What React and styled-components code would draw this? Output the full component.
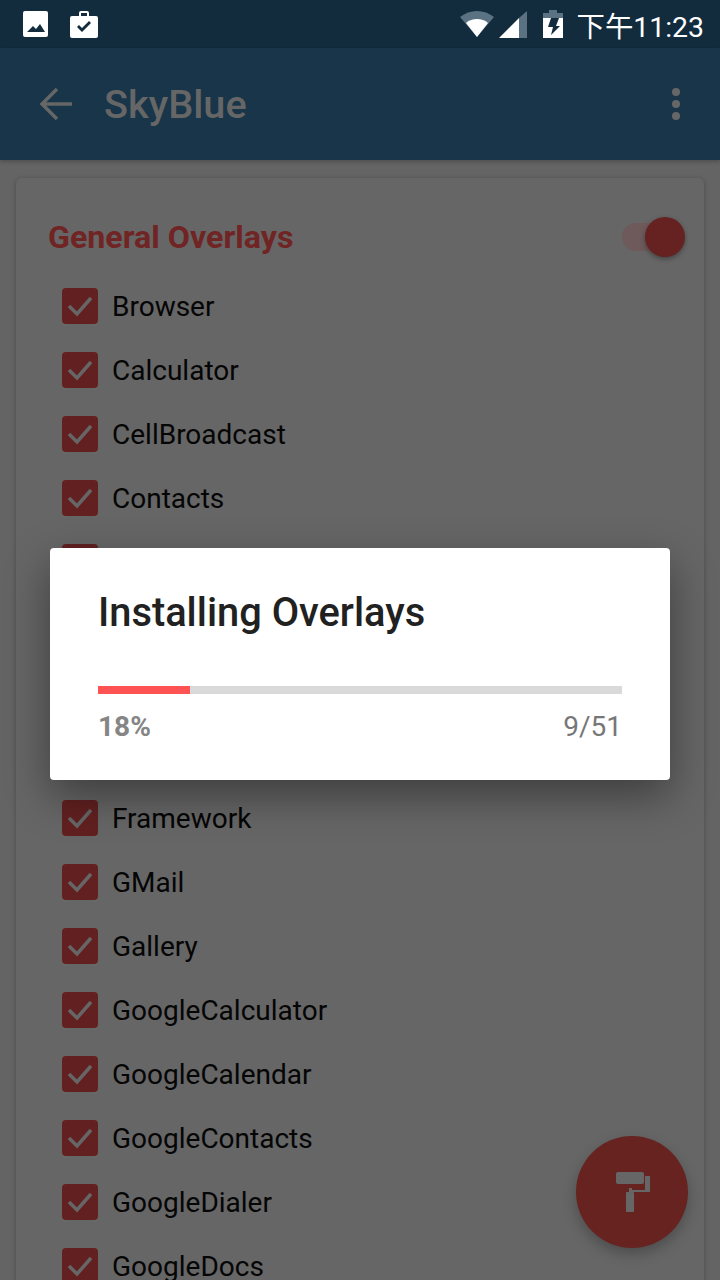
import React from 'react'
import styled, { createGlobalStyle } from 'styled-components'

// the rows behind the dialog can't be read in the picture, so they stay without a label
const items = ['Browser', 'Calculator', 'CellBroadcast', 'Contacts', '', '', '', '', 'Framework', 'GMail', 'Gallery', 'GoogleCalculator', 'GoogleCalendar', 'GoogleContacts', 'GoogleDialer', 'GoogleDocs']

const App = () => {
  return (
    <Screen>
      <GlobalStyle />
      <StatusBar>
        <StatusLeft>
          <svg width="25" height="26" viewBox="0 0 25 26">
            <path fill="#fff" fillRule="evenodd" d="M2 0h21a2 2 0 0 1 2 2v22a2 2 0 0 1-2 2H2a2 2 0 0 1-2-2V2a2 2 0 0 1 2-2zM4 21h18l-5-8-4 5-3-3z" />
          </svg>
          <svg width="28" height="27" viewBox="0 0 28 27">
            <path fill="#fff" fillRule="evenodd" d="M9 5V2a2 2 0 0 1 2-2h6a2 2 0 0 1 2 2v3h7a2 2 0 0 1 2 2v18a2 2 0 0 1-2 2H2a2 2 0 0 1-2-2V7a2 2 0 0 1 2-2zM11 2v3h6V2zM7 16l2-2 3 3 7-7 2 2-9 9z" />
          </svg>
        </StatusLeft>
        <StatusRight>
          <svg width="34" height="26" viewBox="0 0 34 26">
            <path fill="#5b7283" d="M17 26 0 6C5 2 11 0 17 0s12 2 17 6z" />
            <path fill="#fff" d="M17 26 6 12c3-3 7-4 11-4s8 1 11 4z" />
          </svg>
          <SignalIcon width="28" height="27" viewBox="0 0 28 27">
            <path fill="#5b7283" d="M28 0v27H20V7z" />
            <path fill="#fff" d="M20 7v20H0z" />
          </SignalIcon>
          <BatteryIcon width="20" height="28" viewBox="0 0 20 28">
            <path fill="#5b7283" d="M6 0h8v3h6v5H0V3h6z" />
            <path fill="#fff" d="M0 8h20v20H0z" />
            <path fill="#122b3d" d="M8 8h8l-3 8h4L8 25l2-8H5z" />
          </BatteryIcon>
          <Clock>下午11:23</Clock>
        </StatusRight>
      </StatusBar>

      <Toolbar>
        <svg width="34" height="34" viewBox="0 0 34 34">
          <path fill="none" stroke="#666" strokeWidth="3.5" d="M33 17H4M18 2 3 17l15 15" />
        </svg>
        <Title>SkyBlue</Title>
        <Dots>
          <i /><i /><i />
        </Dots>
      </Toolbar>

      <Body>
        <Card>
          <CardHeader>
            <CardTitle>General Overlays</CardTitle>
            <Switch><Knob /></Switch>
          </CardHeader>
          {items.map((name, i) => (
            <Row key={i}>
              <Check>
                <svg width="28" height="24" viewBox="0 0 28 24">
                  <path fill="none" stroke="#666" strokeWidth="3.5" d="M3 12l8 8L25 4" />
                </svg>
              </Check>
              <Label>{name}</Label>
            </Row>
          ))}
        </Card>
      </Body>

      <Fab>
        <FabIcon width="34" height="40" viewBox="0 0 34 40">
          <path fill="#666" d="M2 0h24a2 2 0 0 1 2 2v8a2 2 0 0 1-2 2H2a2 2 0 0 1-2-2V2a2 2 0 0 1 2-2zM29 4h5v16H16v-2h13zM11 20h6a1 1 0 0 1 1 1v18a1 1 0 0 1-1 1h-6a1 1 0 0 1-1-1V21a1 1 0 0 1 1-1zM13 16h3v4h-3z" />
        </FabIcon>
      </Fab>

      <Dialog>
        <DialogTitle>Installing Overlays</DialogTitle>
        <Track>
          <Fill style={{ width: `${(9 / 51) * 100}%` }} />
        </Track>
        <Meta>
          <Percent>18%</Percent>
          <Count>9/51</Count>
        </Meta>
      </Dialog>
    </Screen>
  )
}

const GlobalStyle = createGlobalStyle`
  html, body {
    margin: 0;
    padding: 0;
    background: #646464;
  }
  * {
    box-sizing: border-box;
  }
`

const Screen = styled.div`
  position: relative;
  width: 720px;
  height: 1280px;
  overflow: hidden;
  display: flex;
  flex-direction: column;
  font-family: Roboto, "Noto Sans", sans-serif;
  background: #646464;
`

const StatusBar = styled.div`
  height: 48px;
  flex-shrink: 0;
  background: #122b3d;
  display: flex;
  justify-content: space-between;
  align-items: center;
  padding: 0 16px 0 23px;
`

const StatusLeft = styled.div`
  display: flex;
  align-items: center;
  gap: 22px;
`

const StatusRight = styled.div`
  display: flex;
  align-items: center;
`

const SignalIcon = styled.svg`
  margin-left: 5px;
`

const BatteryIcon = styled.svg`
  margin-left: 16px;
`

const Clock = styled.span`
  margin-left: 14px;
  color: #fff;
  font-size: 28.4px;
  font-family: Roboto, "Noto Sans CJK TC", sans-serif;
`

const Toolbar = styled.div`
  height: 112px;
  flex-shrink: 0;
  background: #183549;
  display: flex;
  align-items: center;
  padding: 0 38px 0 39px;
  box-shadow: 0 2px 4px rgba(0, 0, 0, 0.2);
  position: relative;
`

const Title = styled.h1`
  margin: 0 0 0 31px;
  font-size: 39.7px;
  font-weight: 500;
  color: #666;
  flex: 1;
`

const Dots = styled.div`
  display: flex;
  flex-direction: column;
  gap: 4px;
  margin-right: 2px;
  i {
    width: 8px;
    height: 8px;
    border-radius: 50%;
    background: #666;
  }
`

const Body = styled.div`
  flex: 1;
  padding: 18px 16px 0;
  overflow: hidden;
`

const Card = styled.div`
  background: #666;
  border-radius: 6px;
  padding: 32px 26px 0 32px;
  box-shadow: 0 1px 5px rgba(0, 0, 0, 0.25);
`

const CardHeader = styled.div`
  display: flex;
  justify-content: space-between;
  align-items: center;
  height: 54px;
  margin-bottom: 10px;
`

const CardTitle = styled.h2`
  margin: 0;
  font-size: 32.2px;
  font-weight: 700;
  color: #702424;
`

const Switch = styled.div`
  position: relative;
  width: 56px;
  height: 28px;
  border-radius: 14px;
  background: #6e5a5a;
`

const Knob = styled.div`
  position: absolute;
  right: -7px;
  top: -6px;
  width: 40px;
  height: 40px;
  border-radius: 50%;
  background: #662121;
  box-shadow: 0 2px 5px rgba(0, 0, 0, 0.35);
`

const Row = styled.div`
  display: flex;
  align-items: center;
  height: 64px;
  padding-left: 14px;
`

const Check = styled.div`
  width: 36px;
  height: 36px;
  border-radius: 4px;
  background: #622020;
  display: flex;
  align-items: center;
  justify-content: center;
`

const Label = styled.span`
  margin-left: 14px;
  font-size: 28px;
  color: #050505;
`

const Fab = styled.div`
  position: absolute;
  left: 576px;
  top: 1136px;
  width: 112px;
  height: 112px;
  border-radius: 50%;
  background: #662320;
  display: flex;
  align-items: center;
  justify-content: center;
  box-shadow: 0 6px 14px rgba(0, 0, 0, 0.25);
`

const FabIcon = styled.svg`
  margin-right: -1px;
`

const Dialog = styled.div`
  position: absolute;
  left: 50px;
  top: 548px;
  width: 620px;
  height: 232px;
  background: #fff;
  border-radius: 4px;
  padding: 40px 48px 0;
  box-shadow: 0 16px 44px rgba(0, 0, 0, 0.4);
`

const DialogTitle = styled.h3`
  margin: 0;
  font-size: 39.8px;
  line-height: 50px;
  font-weight: 500;
  color: #212121;
`

const Track = styled.div`
  margin-top: 48px;
  height: 8px;
  background: #d9d9d9;
`

const Fill = styled.div`
  height: 100%;
  background: #ff5252;
`

const Meta = styled.div`
  display: flex;
  justify-content: space-between;
  align-items: center;
  margin-top: 15px;
  font-size: 28px;
  line-height: 36px;
`

const Percent = styled.span`
  font-weight: 700;
  color: #858585;
`

const Count = styled.span`
  color: #777;
`

export default App
